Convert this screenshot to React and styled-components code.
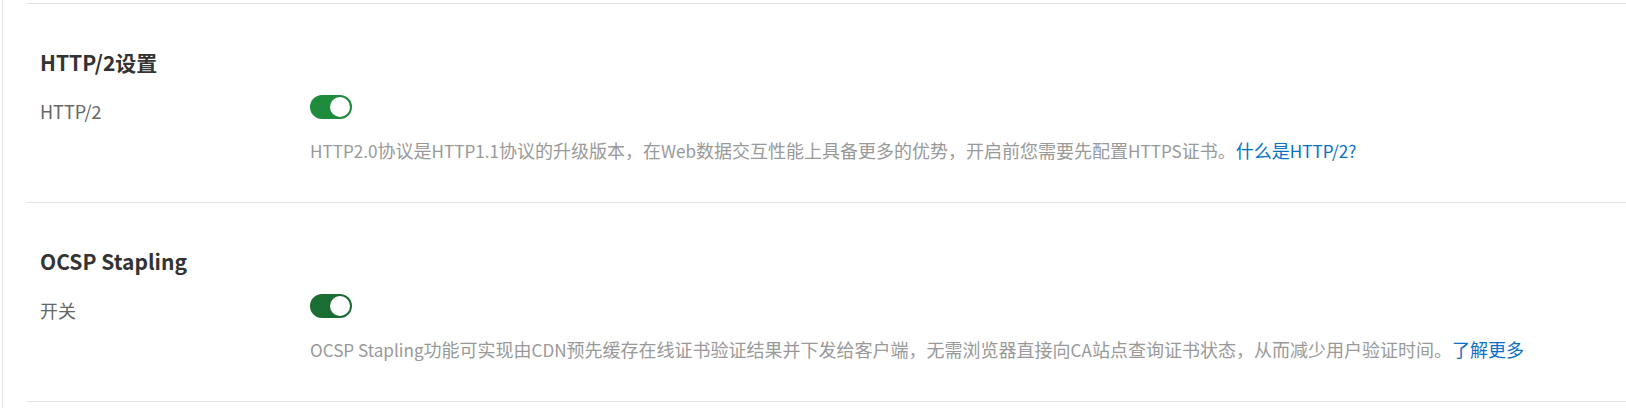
import React, { useState } from "react";
import styled, { createGlobalStyle } from "styled-components";

const GlobalStyle = createGlobalStyle`
  html, body {
    margin: 0;
    padding: 0;
    background: #ffffff;
  }
  body {
    font-family: "Noto Sans CJK SC", "Noto Sans", sans-serif;
  }
`;

const Frame = styled.div`
  margin-left: 2px;
  min-height: 408px;
  border-left: 1px solid #e2e2e2;
  box-sizing: border-box;
  padding-top: 3px;
`;

const List = styled.div`
  margin-left: 24px;
  border-top: 1px solid #e2e2e2;
`;

const Section = styled.section`
  padding: 43px 0 40px 13px;
  border-bottom: 1px solid #e2e2e2;
`;

const Title = styled.h3`
  margin: 0 0 18px;
  font-size: 21px;
  line-height: 30px;
  font-weight: 700;
  color: #333333;
`;

const Row = styled.div`
  display: flex;
  align-items: flex-start;
`;

const Label = styled.div`
  width: 270px;
  flex: none;
  font-size: 18px;
  line-height: 33px;
  color: #666666;
`;

const Control = styled.div`
  display: flex;
  flex-direction: column;
  align-items: flex-start;
`;

const Track = styled.button`
  position: relative;
  width: 42px;
  height: 24px;
  padding: 0;
  border: none;
  border-radius: 12px;
  background: ${(p) => (p.$on ? p.$color : "#cccccc")};
  cursor: pointer;
  outline: none;
`;

const Knob = styled.span`
  position: absolute;
  top: 2px;
  left: ${(p) => (p.$on ? "20px" : "2px")};
  width: 20px;
  height: 20px;
  border-radius: 50%;
  background: #ffffff;
  transition: left 0.15s;
`;

const Desc = styled.p`
  margin: 19px 0 0;
  height: 24px;
  font-size: 18px;
  line-height: 24px;
  color: #999999;
  white-space: nowrap;
`;

const Latin = styled.span`
  font-size: 17.1px;
  line-height: 1;
`;

const Link = styled.a`
  color: #0a70c8;
  text-decoration: none;
`;

function Toggle({ color, initial = true }) {
  const [on, setOn] = useState(initial);
  return (
    <Track $on={on} $color={color} onClick={() => setOn(!on)} aria-pressed={on}>
      <Knob $on={on} />
    </Track>
  );
}

function Mixed({ text }) {
  const parts = text.split(/([A-Za-z0-9./? ]+)/).filter(Boolean);
  return parts.map((p, i) =>
    /^[A-Za-z0-9./? ]+$/.test(p) ? <Latin key={i}>{p}</Latin> : <React.Fragment key={i}>{p}</React.Fragment>
  );
}

const sections = [
  {
    title: "HTTP/2设置",
    label: "HTTP/2",
    color: "#1e8c3c",
    desc: "HTTP2.0协议是HTTP1.1协议的升级版本，在Web数据交互性能上具备更多的优势，开启前您需要先配置HTTPS证书。",
    link: "什么是HTTP/2?",
  },
  {
    title: "OCSP Stapling",
    label: "开关",
    color: "#1a6e34",
    desc: "OCSP Stapling功能可实现由CDN预先缓存在线证书验证结果并下发给客户端，无需浏览器直接向CA站点查询证书状态，从而减少用户验证时间。",
    link: "了解更多",
  },
];

export default function App() {
  return (
    <>
      <GlobalStyle />
      <Frame>
        <List>
          {sections.map((s) => (
            <Section key={s.title}>
              <Title>{s.title}</Title>
              <Row>
                <Label>{s.label}</Label>
                <Control>
                  <Toggle color={s.color} />
                  <Desc>
                    <Mixed text={s.desc} />
                    <Link href="#">
                      <Mixed text={s.link} />
                    </Link>
                  </Desc>
                </Control>
              </Row>
            </Section>
          ))}
        </List>
      </Frame>
    </>
  );
}
